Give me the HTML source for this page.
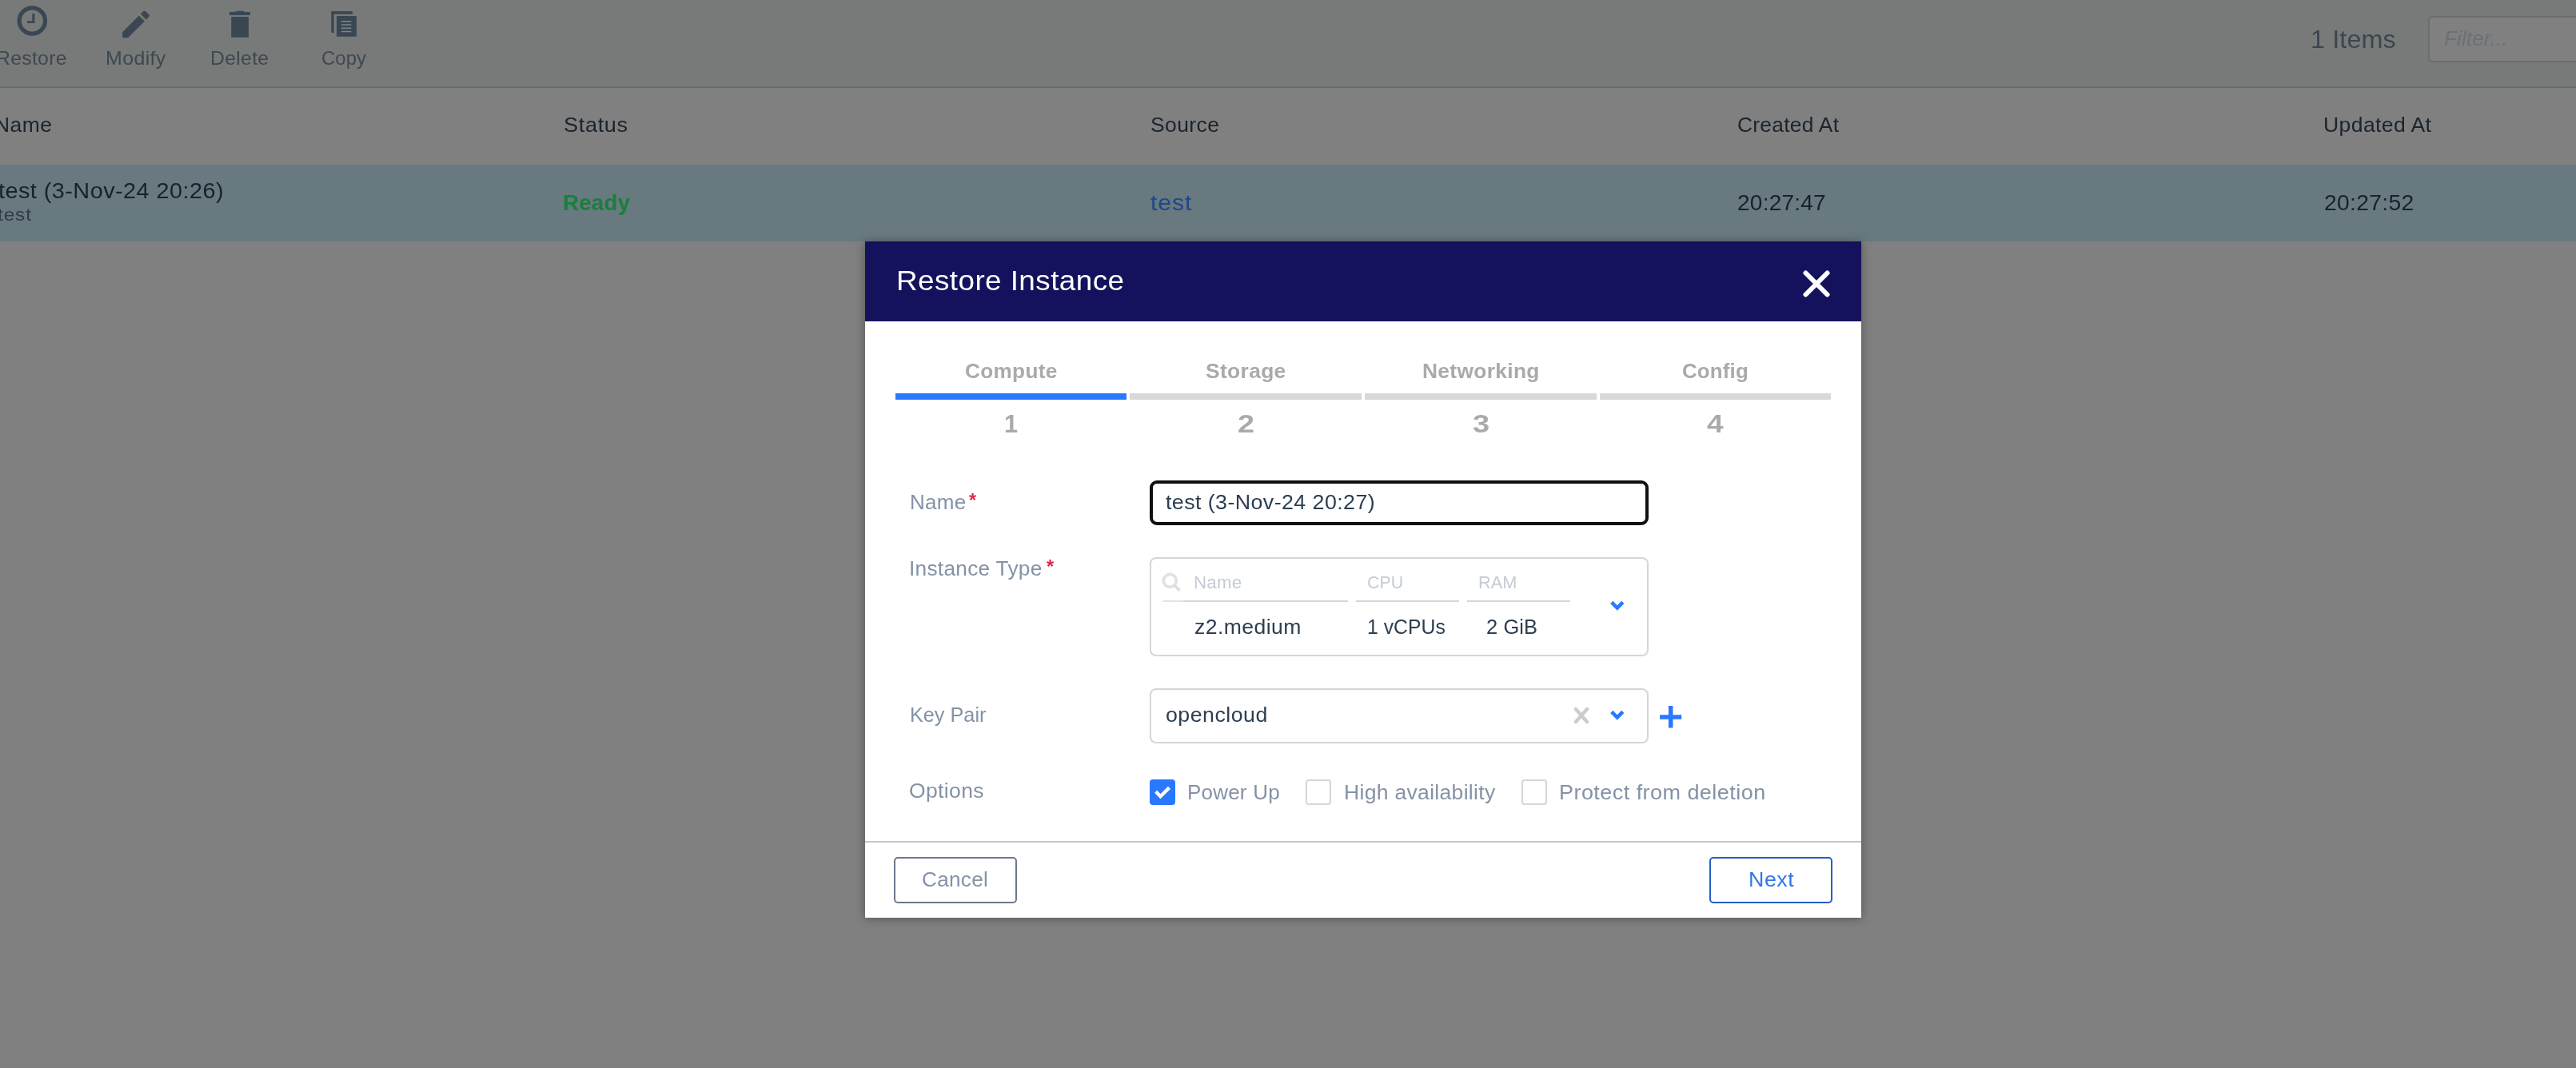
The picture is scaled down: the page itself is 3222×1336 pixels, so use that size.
<!DOCTYPE html>
<html lang="en">
<head>
<meta charset="utf-8">
<title>Restore Instance</title>
<style>
*{box-sizing:border-box;margin:0;padding:0}
html,body{width:3222px;height:1336px;overflow:hidden}
body{position:relative;background:#808080;font-family:"Liberation Sans",sans-serif;color:#161f28}
.abs{position:absolute}
.t{position:absolute;white-space:nowrap;line-height:1}
svg{position:absolute;overflow:visible}
/* dimmed page */
#bg{left:0;top:0;width:3222px;height:1336px;overflow:hidden;will-change:transform}
#toolbar{left:0;top:0;width:3222px;height:108px;background:#787a79}
#tbline{left:0;top:108px;width:3222px;height:2px;background:#656b70}
#filter{left:3037px;top:20px;width:260px;height:58px;border:2px solid #6b6e6d;border-radius:6px;background:#808080}
#row{left:0;top:206px;width:3222px;height:96px;background:#68797f}
/* modal */
#modal{will-change:transform;left:1082px;top:302px;width:1246px;height:846px;background:#fff;box-shadow:0 1px 12px 0 rgba(0,0,0,.34)}
#mwrap{left:0;top:-1px;width:1246px;height:847px}
#mhead{left:0;top:1px;width:1246px;height:100px;background:#14125c}
.bar{height:8px;top:191px;background:#d8d8d8}
.ul{height:2px;background:#d6d6d6;top:450px}
.box{border:2px solid #d6d6d6;border-radius:8px;background:#fff}
.cb{width:32px;height:32px;border:2px solid #d6d6d6;border-radius:4px;background:#fff;top:674px}
.btn{height:58px;width:154px;top:771px;border-radius:5px;background:#fff}
</style>
</head>
<body>

<!-- ======= dimmed page behind the dialog ======= -->
<div class="abs" id="bg">
<div class="abs" id="toolbar"></div>
<div class="abs" id="tbline"></div>
<div class="abs" id="filter"></div>
<div class="abs" id="row"></div>

<!-- toolbar icons -->
<svg style="left:0;top:0" width="500" height="108" viewBox="0 0 500 108">
  <!-- clock -->
  <circle cx="40.3" cy="26" r="16.2" fill="none" stroke="#3a4753" stroke-width="5.2"/>
  <path d="M40.3 17h3.1v12.1h-9.4v-2.9h6.3z" fill="#3a4753"/>
  <!-- pencil -->
  <g transform="translate(147.5 7.8) scale(1.875)" fill="#3a4753">
    <path d="M3 17.25V21h3.75L17.81 9.94l-3.75-3.75L3 17.25zM20.71 7.04c.39-.39.39-1.02 0-1.41l-2.34-2.34c-.39-.39-1.02-.39-1.41 0l-1.83 1.83 3.75 3.75 1.83-1.83z"/>
  </g>
  <!-- trash -->
  <path d="M289.2 21.1h21.8v25.7h-21.8zM287 15.1h6.3l3.1-1.3h7.8l2.3 1.3h6.5v3.8h-26z" fill="#3a4753"/>
  <!-- copy -->
  <path d="M414.3 14.1h26.7v3.6h-23.3v23.2h-3.4z" fill="#3a4753"/>
  <rect x="421" y="20" width="25" height="25.8" fill="#3a4753"/>
  <path d="M427 26.7h12.3M427 31h12.3M427 35.3h12.3M427 39.5h12.3" stroke="#7c858d" stroke-width="1.5" fill="none"/>
</svg>

<div class="t" style="left:-5.0px;top:61.00px;font-size:24px;color:#3d4852;letter-spacing:0.28px;transform:scaleX(1.0319);transform-origin:0 0;">Restore</div>
<div class="t" style="left:131.5px;top:61.00px;font-size:24px;color:#3d4852;letter-spacing:0.35px;transform:scaleX(1.0396);transform-origin:0 0;">Modify</div>
<div class="t" style="left:263.0px;top:61.00px;font-size:24px;color:#3d4852;letter-spacing:0.28px;transform:scaleX(1.0331);transform-origin:0 0;">Delete</div>
<div class="t" style="left:401.8px;top:61.00px;font-size:24px;color:#3d4852;transform:scaleX(0.9989);transform-origin:0 0;">Copy</div>
<div class="t" style="left:2890.1px;top:33.00px;font-size:32px;color:#3a4650;letter-spacing:0.12px;transform:scaleX(1.0105);transform-origin:0 0;">1 Items</div>
<div class="t" style="left:3056.9px;top:35.00px;font-size:26px;color:#697078;font-style:italic;letter-spacing:0.05px;transform:scaleX(1.0083);transform-origin:0 0;">Filter...</div>
<div class="t" style="left:-6.7px;top:144.00px;font-size:25.5px;color:#1b242d;letter-spacing:0.50px;transform:scaleX(1.0362);transform-origin:0 0;">Name</div>
<div class="t" style="left:704.5px;top:144.00px;font-size:25.5px;color:#1b242d;letter-spacing:0.58px;transform:scaleX(1.0666);transform-origin:0 0;">Status</div>
<div class="t" style="left:1438.5px;top:144.00px;font-size:25.5px;color:#1b242d;letter-spacing:0.38px;transform:scaleX(1.0382);transform-origin:0 0;">Source</div>
<div class="t" style="left:2172.6px;top:144.00px;font-size:25.5px;color:#1b242d;letter-spacing:0.28px;transform:scaleX(1.0323);transform-origin:0 0;">Created At</div>
<div class="t" style="left:2906.2px;top:144.00px;font-size:25.5px;color:#1b242d;letter-spacing:0.37px;transform:scaleX(1.0415);transform-origin:0 0;">Updated At</div>
<div class="t" style="left:-2.4px;top:225.00px;font-size:27.5px;color:#17222c;letter-spacing:0.41px;transform:scaleX(1.0507);transform-origin:0 0;">test (3-Nov-24 20:26)</div>
<div class="t" style="left:-3.4px;top:258.00px;font-size:22px;color:#2f3d49;letter-spacing:0.77px;transform:scaleX(1.1104);transform-origin:0 0;">test</div>
<div class="t" style="left:704.4px;top:241.00px;font-size:27px;color:#18803a;font-weight:bold;letter-spacing:0.28px;transform:scaleX(1.0221);transform-origin:0 0;">Ready</div>
<div class="t" style="left:1439.0px;top:240.00px;font-size:27.5px;color:#1d478c;letter-spacing:0.85px;transform:scaleX(1.0960);transform-origin:0 0;">test</div>
<div class="t" style="left:2172.8px;top:240.00px;font-size:27.5px;color:#17222c;letter-spacing:0.20px;transform:scaleX(1.0208);transform-origin:0 0;">20:27:47</div>
<div class="t" style="left:2906.8px;top:240.00px;font-size:27.5px;color:#17222c;letter-spacing:0.28px;transform:scaleX(1.0295);transform-origin:0 0;">20:27:52</div>
</div>

<!-- ======= modal dialog ======= -->
<div class="abs" id="modal">
<div class="abs" id="mwrap">
  <div class="abs" id="mhead"></div>
  <!-- close -->
  <svg style="left:1173px;top:37px" width="34" height="34" viewBox="0 0 34 34"><path d="M3.5 3.5l27 27M30.5 3.5l-27 27" stroke="#fff" stroke-width="6" stroke-linecap="round" fill="none"/></svg>

  <!-- wizard steps -->
  <div class="abs bar" style="left:38px;width:289px;background:#2979ff"></div>
  <div class="abs bar" style="left:331px;width:290px"></div>
  <div class="abs bar" style="left:625px;width:290px"></div>
  <div class="abs bar" style="left:919px;width:289px"></div>

  <!-- name input (focused) -->
  <div class="abs" style="left:356px;top:300px;width:624px;height:56px;border:4px solid #101010;border-radius:9px;background:#fff"></div>

  <!-- instance type selector -->
  <div class="abs box" style="left:356px;top:396px;width:624px;height:124px"></div>
  <svg style="left:371px;top:415px" width="26" height="26" viewBox="0 0 26 26"><circle cx="10.3" cy="10.4" r="8" fill="none" stroke="#dfe1e3" stroke-width="3.6"/><path d="M16.2 16.4l5.3 5.2" stroke="#dfe1e3" stroke-width="4" stroke-linecap="round"/></svg>
  <div class="abs ul" style="left:372px;width:232px"></div>
  <div class="abs ul" style="left:372px;width:26px;background:#e4e4e8"></div>
  <div class="abs ul" style="left:614px;width:129px"></div>
  <div class="abs ul" style="left:753px;width:129px"></div>
  <svg style="left:930px;top:448.4px" width="22" height="16" viewBox="0 0 22 16"><path d="M3.8 4.4l7 7.1 7-7.1" stroke="#2979ff" stroke-width="4.6" fill="none"/></svg>

  <!-- key pair selector -->
  <div class="abs box" style="left:356px;top:560px;width:624px;height:69px"></div>
  <svg style="left:885px;top:580.8px" width="22" height="24" viewBox="0 0 22 24"><path d="M3.9 5l14.2 16M18.1 5L3.9 21" stroke="#cccccc" stroke-width="4.4" stroke-linecap="round" fill="none"/></svg>
  <svg style="left:930px;top:584.6px" width="22" height="16" viewBox="0 0 22 16"><path d="M3.8 4.4l7 7.1 7-7.1" stroke="#2979ff" stroke-width="4.6" fill="none"/></svg>
  <svg style="left:994px;top:582px" width="28" height="28" viewBox="0 0 28 28"><path d="M13.7 0v27.6M.1 14h27.1" stroke="#2979ff" stroke-width="5.5" fill="none"/></svg>

  <!-- options -->
  <div class="abs cb" style="left:356px;background:#2979ff;border-color:#2979ff"></div>
  <svg style="left:356px;top:674px" width="32" height="32" viewBox="0 0 32 32"><path d="M7.7 15.3l5.7 6 11.1-10.9" stroke="#fff" stroke-width="4.3" fill="none"/></svg>
  <div class="abs cb" style="left:551px"></div>
  <div class="abs cb" style="left:821px"></div>

  <!-- footer -->
  <div class="abs" style="left:0;top:751px;width:1246px;height:2px;background:#bcc8d6"></div>
  <div class="abs btn" style="left:36px;border:2px solid #6a788d"></div>
  <div class="abs btn" style="left:1056px;border:2px solid #2460c4"></div>

  <div class="t" style="left:39.0px;top:33.00px;font-size:35.5px;color:#fff;letter-spacing:0.42px;transform:scaleX(1.0376);transform-origin:0 0;">Restore Instance</div>
  <div class="t" style="left:124.6px;top:151.00px;font-size:25.5px;color:#aaaaaa;font-weight:bold;letter-spacing:0.31px;transform:scaleX(1.0261);transform-origin:0 0;">Compute</div>
  <div class="t" style="left:426.3px;top:151.00px;font-size:25.5px;color:#aaaaaa;font-weight:bold;letter-spacing:0.34px;transform:scaleX(1.0339);transform-origin:0 0;">Storage</div>
  <div class="t" style="left:696.7px;top:151.00px;font-size:25.5px;color:#aaaaaa;font-weight:bold;letter-spacing:0.32px;transform:scaleX(1.0331);transform-origin:0 0;">Networking</div>
  <div class="t" style="left:1022.4px;top:151.00px;font-size:25.5px;color:#aaaaaa;font-weight:bold;letter-spacing:0.15px;transform:scaleX(1.0149);transform-origin:0 0;">Config</div>
  <div class="t" style="left:173.8px;top:213.00px;font-size:32px;color:#aaaaaa;font-weight:bold;transform:scaleX(0.9603);transform-origin:0 0;">1</div>
  <div class="t" style="left:466.0px;top:213.00px;font-size:32px;color:#aaaaaa;font-weight:bold;transform:scaleX(1.1813);transform-origin:0 0;">2</div>
  <div class="t" style="left:759.6px;top:213.00px;font-size:32px;color:#aaaaaa;font-weight:bold;transform:scaleX(1.1882);transform-origin:0 0;">3</div>
  <div class="t" style="left:1052.8px;top:213.00px;font-size:32px;color:#aaaaaa;font-weight:bold;transform:scaleX(1.1552);transform-origin:0 0;">4</div>
  <div class="t" style="left:55.9px;top:315.00px;font-size:25.5px;color:#8592a6;letter-spacing:0.29px;transform:scaleX(1.0204);transform-origin:0 0;">Name</div>
  <div class="t" style="left:129.6px;top:313.00px;font-size:24px;color:#e5254b;font-weight:bold;transform:scaleX(0.9626);transform-origin:0 0;">*</div>
  <div class="t" style="left:55.3px;top:398.00px;font-size:25.5px;color:#8592a6;letter-spacing:0.26px;transform:scaleX(1.0303);transform-origin:0 0;">Instance Type</div>
  <div class="t" style="left:227.2px;top:396.00px;font-size:24px;color:#e5254b;font-weight:bold;transform:scaleX(0.9734);transform-origin:0 0;">*</div>
  <div class="t" style="left:376.2px;top:315.00px;font-size:25.5px;color:#2c3e50;letter-spacing:0.39px;transform:scaleX(1.0520);transform-origin:0 0;">test (3-Nov-24 20:27)</div>
  <div class="t" style="left:411.3px;top:417.00px;font-size:22px;color:#c3ccd6;letter-spacing:0.18px;transform:scaleX(1.0150);transform-origin:0 0;">Name</div>
  <div class="t" style="left:627.9px;top:417.00px;font-size:22px;color:#c3ccd6;transform:scaleX(0.9694);transform-origin:0 0;">CPU</div>
  <div class="t" style="left:766.5px;top:417.00px;font-size:22px;color:#c3ccd6;transform:scaleX(0.9872);transform-origin:0 0;">RAM</div>
  <div class="t" style="left:412.0px;top:471.00px;font-size:25.5px;color:#2c3e50;letter-spacing:0.41px;transform:scaleX(1.0418);transform-origin:0 0;">z2.medium</div>
  <div class="t" style="left:628.1px;top:471.00px;font-size:25.5px;color:#2c3e50;transform:scaleX(0.9719);transform-origin:0 0;">1 vCPUs</div>
  <div class="t" style="left:777.1px;top:471.00px;font-size:25.5px;color:#2c3e50;letter-spacing:0.01px;">2 GiB</div>
  <div class="t" style="left:55.5px;top:581.00px;font-size:25.5px;color:#8592a6;transform:scaleX(0.9898);transform-origin:0 0;">Key Pair</div>
  <div class="t" style="left:375.8px;top:581.00px;font-size:25.5px;color:#2c3e50;letter-spacing:0.45px;transform:scaleX(1.0492);transform-origin:0 0;">opencloud</div>
  <div class="t" style="left:55.4px;top:676.00px;font-size:25.5px;color:#8592a6;letter-spacing:0.36px;transform:scaleX(1.0388);transform-origin:0 0;">Options</div>
  <div class="t" style="left:403.4px;top:678.00px;font-size:25.5px;color:#8592a6;letter-spacing:0.20px;transform:scaleX(1.0199);transform-origin:0 0;">Power Up</div>
  <div class="t" style="left:598.7px;top:678.00px;font-size:25.5px;color:#8592a6;letter-spacing:0.29px;transform:scaleX(1.0407);transform-origin:0 0;">High availability</div>
  <div class="t" style="left:868.4px;top:678.00px;font-size:25.5px;color:#8592a6;letter-spacing:0.43px;transform:scaleX(1.0585);transform-origin:0 0;">Protect from deletion</div>
  <div class="t" style="left:71.4px;top:787.00px;font-size:25.5px;color:#8592a6;letter-spacing:0.27px;transform:scaleX(1.0269);transform-origin:0 0;">Cancel</div>
  <div class="t" style="left:1104.5px;top:787.00px;font-size:25.5px;color:#2f76ec;letter-spacing:0.53px;transform:scaleX(1.0496);transform-origin:0 0;">Next</div>
</div>
</div>

</body>
</html>
